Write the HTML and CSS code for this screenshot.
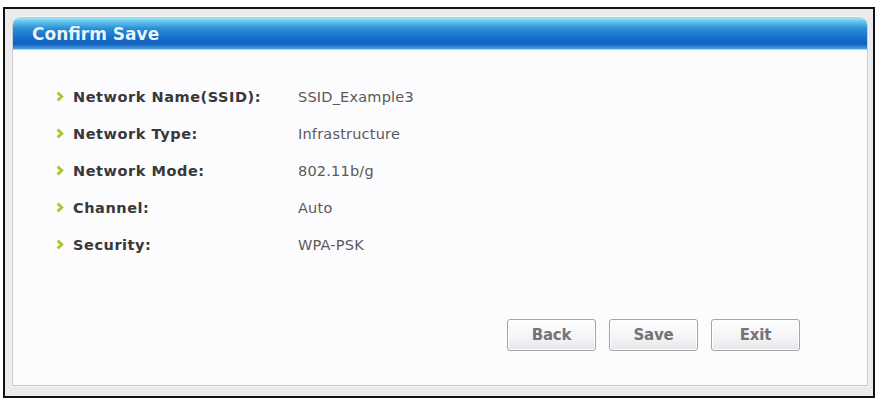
FILE: index.html
```html
<!DOCTYPE html>
<html lang="en">
<head>
<meta charset="utf-8">
<title>Confirm Save</title>
<link rel="stylesheet" href="styles.css">
</head>
<body>
<div class="frame">
  <div class="panel">
    <div class="panel-header">Confirm Save</div>
    <div class="panel-body">
      <ul class="summary">
        <li class="row"><span class="bullet"><svg width="8" height="11" viewBox="0 0 8 11"><polyline points="1.6,1.6 5.8,5.5 1.6,9.4" fill="none" stroke="#a2cc2c" stroke-width="2.8"/></svg></span><span class="label">Network Name(SSID):</span><span class="value">SSID_Example3</span></li>
        <li class="row"><span class="bullet"><svg width="8" height="11" viewBox="0 0 8 11"><polyline points="1.6,1.6 5.8,5.5 1.6,9.4" fill="none" stroke="#a2cc2c" stroke-width="2.8"/></svg></span><span class="label">Network Type:</span><span class="value">Infrastructure</span></li>
        <li class="row"><span class="bullet"><svg width="8" height="11" viewBox="0 0 8 11"><polyline points="1.6,1.6 5.8,5.5 1.6,9.4" fill="none" stroke="#a2cc2c" stroke-width="2.8"/></svg></span><span class="label">Network Mode:</span><span class="value">802.11b/g</span></li>
        <li class="row"><span class="bullet"><svg width="8" height="11" viewBox="0 0 8 11"><polyline points="1.6,1.6 5.8,5.5 1.6,9.4" fill="none" stroke="#a2cc2c" stroke-width="2.8"/></svg></span><span class="label">Channel:</span><span class="value">Auto</span></li>
        <li class="row"><span class="bullet"><svg width="8" height="11" viewBox="0 0 8 11"><polyline points="1.6,1.6 5.8,5.5 1.6,9.4" fill="none" stroke="#a2cc2c" stroke-width="2.8"/></svg></span><span class="label">Security:</span><span class="value">WPA-PSK</span></li>
      </ul>
      <div class="actions">
        <button class="btn" type="button">Back</button>
        <button class="btn" type="button">Save</button>
        <button class="btn" type="button">Exit</button>
      </div>
    </div>
  </div>
</div>
</body>
</html>
```

FILE: styles.css
```css
html, body {
  margin: 0;
  padding: 0;
  background: #ffffff;
}

body {
  font-family: "DejaVu Sans", Verdana, sans-serif;
}

.frame {
  box-sizing: border-box;
  width: 872px;
  height: 391px;
  margin: 7px 0 0 3px;
  border: 2px solid #111111;
  background: #ebebec;
  padding: 8px 5px 10px 7px;
  display: flex;
}

.panel {
  flex: 1;
  display: flex;
  flex-direction: column;
  border: 1px solid #c9c9cc;
  border-radius: 8px 8px 0 0;
  background: #fcfbfd;
  box-shadow: 0 0 0 1px #f4f4f6;
  overflow: hidden;
}

.panel-header {
  height: 32px;
  box-sizing: border-box;
  padding: 5px 0 0 19px;
  background: linear-gradient(to bottom,
    #9ae8f8 0px,
    #6cc8ee 3px,
    #2e92da 10px,
    #1a72cc 18px,
    #1462c0 26px,
    #3c96dc 30px,
    #6ab6e6 32px);
  border-bottom: 1px solid #b6d4ec;
  color: #e6f6ff;
  font-weight: bold;
  font-size: 17px;
  line-height: 22px;
  text-shadow: 0 0 1px rgba(0, 40, 110, 0.5);
}

.panel-body {
  flex: 1;
  display: flex;
  flex-direction: column;
  padding: 28px 0 0 43px;
}

.summary {
  list-style: none;
  margin: 0;
  padding: 0;
}

.row {
  display: flex;
  align-items: center;
  height: 37px;
}

.bullet {
  width: 17px;
  display: flex;
  align-items: center;
}

.label {
  width: 225px;
  font-weight: bold;
  font-size: 14.5px;
  letter-spacing: 0.55px;
  color: #383838;
}

.value {
  font-size: 14.5px;
  letter-spacing: 0.2px;
  color: #5a5a5a;
}

.actions {
  display: flex;
  justify-content: flex-end;
  gap: 13px;
  margin-top: 56px;
  padding-right: 67px;
}

.btn {
  width: 89px;
  height: 32px;
  box-sizing: border-box;
  border: 1px solid #a4a4a8;
  border-radius: 3px;
  background: linear-gradient(to bottom, #fefefe 0%, #f4f4f6 60%, #e6e6ea 100%);
  box-shadow: inset 0 0 0 1px #ffffff;
  font-family: "DejaVu Sans", Verdana, sans-serif;
  font-weight: bold;
  font-size: 15px;
  color: #747476;
  padding: 0;
  letter-spacing: -0.2px;
}
```
